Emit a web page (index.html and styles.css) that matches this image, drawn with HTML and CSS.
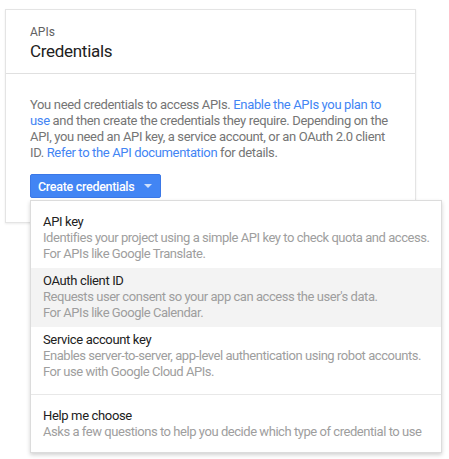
FILE: index.html
```html
<!DOCTYPE html>
<html>
<head>
<meta charset="utf-8">
<link rel="stylesheet" href="styles.css">
</head>
<body>
<div class="page">
  <section class="card">
    <header class="card-head">
      <div class="crumb">APIs</div>
      <h1 class="title">Credentials</h1>
    </header>
    <div class="card-body">
      <p class="intro">You need credentials to access APIs. <a href="#">Enable the APIs you plan to use</a> and then create the credentials they require. Depending on the API, you need an API key, a service account, or an OAuth 2.0 client ID. <a href="#">Refer to the API documentation</a> for details.</p>
      <button class="btn"><span class="btn-label">Create credentials</span><span class="caret"></span></button>
    </div>
  </section>
  <div class="menu">
    <div class="item">
      <div class="item-title">API key</div>
      <div class="item-desc">Identifies your project using a simple API key to check quota and access.</div>
      <div class="item-desc">For APIs like Google Translate.</div>
    </div>
    <div class="item item-hover">
      <div class="item-title">OAuth client ID</div>
      <div class="item-desc">Requests user consent so your app can access the user's data.</div>
      <div class="item-desc">For APIs like Google Calendar.</div>
    </div>
    <div class="item">
      <div class="item-title">Service account key</div>
      <div class="item-desc">Enables server-to-server, app-level authentication using robot accounts.</div>
      <div class="item-desc">For use with Google Cloud APIs.</div>
    </div>
    <div class="sep"></div>
    <div class="item item-help">
      <div class="item-title">Help me choose</div>
      <div class="item-desc">Asks a few questions to help you decide which type of credential to use</div>
    </div>
  </div>
</div>
</body>
</html>
```
FILE: styles.css
```css
html, body {
  margin: 0;
  padding: 0;
  background: #fff;
}
body {
  font-family: Roboto, "Noto Sans", Arial, sans-serif;
  font-size: 13px;
  line-height: 16px;
  letter-spacing: -0.35px;
  color: #212121;
}
.page {
  position: relative;
  width: 449px;
  height: 459px;
  padding: 9px 0 0 5px;
  box-sizing: border-box;
}
.card {
  width: 411px;
  height: 214px;
  box-sizing: border-box;
  border: 1px solid #e4e4e4;
  background: #fff;
  box-shadow: 0 1px 2px rgba(0,0,0,0.08);
}
.card-head {
  height: 64px;
  box-sizing: border-box;
  padding: 14px 24px 0;
  border-bottom: 1px solid #e0e0e0;
}
.crumb {
  font-size: 12px;
  line-height: 16px;
  letter-spacing: 0;
  color: #616161;
}
.title {
  margin: 0;
  font-size: 17px;
  font-weight: 400;
  line-height: 22px;
  letter-spacing: -0.3px;
  color: #212121;
}
.card-body {
  padding: 23px 24px 0;
}
.intro {
  margin: 0 0 13px;
  color: #757575;
}
.intro a {
  color: #4285f4;
  text-decoration: none;
}
.btn {
  display: flex;
  align-items: center;
  height: 24px;
  width: 131px;
  box-sizing: border-box;
  padding: 0 0 0 7px;
  border: 1px solid #3b78e7;
  border-radius: 2px;
  background: #4285f4;
  color: #fff;
  font-family: Roboto, Arial, sans-serif;
  font-size: 12.5px;
  font-weight: 500;
  letter-spacing: -0.3px;
  white-space: nowrap;
  text-align: left;
}
.btn-label {
  width: 106px;
}
.caret {
  width: 0;
  height: 0;
  border-left: 4px solid transparent;
  border-right: 4px solid transparent;
  border-top: 4px solid rgba(255,255,255,0.75);
}
.menu {
  position: absolute;
  left: 30px;
  top: 200px;
  width: 412px;
  height: 253px;
  box-sizing: border-box;
  padding: 8px 0 6px;
  background: #fff;
  border: 1px solid #dcdcdc;
  box-shadow: 0 2px 4px rgba(0,0,0,0.18);
}
.item {
  padding: 5px 8px 6px 12px;
  white-space: nowrap;
}
.item-hover {
  background: #f3f3f3;
}
.item-title {
  color: #212121;
}
.item-desc {
  color: #9e9e9e;
  letter-spacing: -0.45px;
}
.sep {
  height: 1px;
  background: #e8e8e8;
  margin: 8px 0 0;
}
.item-help {
  padding-top: 13px;
}
```
